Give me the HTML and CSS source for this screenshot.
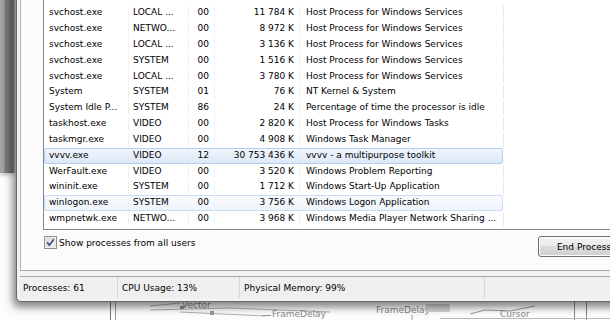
FILE: index.html
```html
<!DOCTYPE html>
<html lang="en">
<head>
    <meta charset="UTF-8">
    <title>Windows Task Manager</title>
    <link rel="stylesheet" href="styles.css">
</head>
<body>
    <div class="desk">
        <!-- janela de fundo (esquerda) -->
        <div class="backwin"></div>

        <!-- patch do vvvv por baixo -->
        <svg class="patch" width="610" height="30" viewBox="0 290 610 30">
            <line x1="110.5" y1="290" x2="110.5" y2="320" stroke="#7a7a7a"/>
            <line x1="115.5" y1="290" x2="115.5" y2="320" stroke="#9a9a9a"/>
            <path d="M150 306 L180 303 M150 310 L230 308 M180 312 L265 316 M230 308 L330 312" stroke="#b0b0b0" fill="none"/>
            <rect x="180" y="306" width="4" height="3" fill="#8a8a8a"/>
            <rect x="210" y="311" width="4" height="4" fill="#9a9a9a"/>
            <text x="182" y="308" class="node">Vector</text>
            <text x="272" y="317" class="node">FrameDelay</text>
            <line x1="262" y1="315.5" x2="271" y2="315.5" stroke="#999"/>
            <text x="376" y="313" class="node">FrameDelay</text>
            <rect x="426" y="304" width="24" height="8" fill="#d4d4d4"/>
            <line x1="412" y1="315" x2="412" y2="320" stroke="#999"/>
            <path d="M470 314 L485 310 L510 311 L535 306" stroke="#9a9a9a" fill="none"/>
            <text x="500" y="317" class="node">Cursor</text>
            <line x1="574.5" y1="300" x2="574.5" y2="320" stroke="#888"/>
            <line x1="586.5" y1="300" x2="586.5" y2="320" stroke="#888"/>
            <line x1="440" y1="318.5" x2="610" y2="318.5" stroke="#b8b8b8"/>
        </svg>

        <!-- Gerenciador de Tarefas -->
        <div class="taskmgr">
            <div class="tabpage">
                <div class="list">
                    <div class="row">
                        <span class="c-name">svchost.exe</span><span class="c-user">LOCAL ...</span><span class="c-cpu">00</span><span class="c-mem">11 784 K</span><span class="c-desc">Host Process for Windows Services</span>
                    </div>
                    <div class="row">
                        <span class="c-name">svchost.exe</span><span class="c-user">NETWO...</span><span class="c-cpu">00</span><span class="c-mem">8 972 K</span><span class="c-desc">Host Process for Windows Services</span>
                    </div>
                    <div class="row">
                        <span class="c-name">svchost.exe</span><span class="c-user">LOCAL ...</span><span class="c-cpu">00</span><span class="c-mem">3 136 K</span><span class="c-desc">Host Process for Windows Services</span>
                    </div>
                    <div class="row">
                        <span class="c-name">svchost.exe</span><span class="c-user">SYSTEM</span><span class="c-cpu">00</span><span class="c-mem">1 516 K</span><span class="c-desc">Host Process for Windows Services</span>
                    </div>
                    <div class="row">
                        <span class="c-name">svchost.exe</span><span class="c-user">LOCAL ...</span><span class="c-cpu">00</span><span class="c-mem">3 780 K</span><span class="c-desc">Host Process for Windows Services</span>
                    </div>
                    <div class="row">
                        <span class="c-name">System</span><span class="c-user">SYSTEM</span><span class="c-cpu">01</span><span class="c-mem">76 K</span><span class="c-desc">NT Kernel &amp; System</span>
                    </div>
                    <div class="row">
                        <span class="c-name">System Idle P...</span><span class="c-user">SYSTEM</span><span class="c-cpu">86</span><span class="c-mem">24 K</span><span class="c-desc">Percentage of time the processor is idle</span>
                    </div>
                    <div class="row">
                        <span class="c-name">taskhost.exe</span><span class="c-user">VIDEO</span><span class="c-cpu">00</span><span class="c-mem">2 820 K</span><span class="c-desc">Host Process for Windows Tasks</span>
                    </div>
                    <div class="row">
                        <span class="c-name">taskmgr.exe</span><span class="c-user">VIDEO</span><span class="c-cpu">00</span><span class="c-mem">4 908 K</span><span class="c-desc">Windows Task Manager</span>
                    </div>
                    <div class="row selected">
                        <span class="c-name">vvvv.exe</span><span class="c-user">VIDEO</span><span class="c-cpu">12</span><span class="c-mem">30 753 436 K</span><span class="c-desc">vvvv - a multipurpose toolkit</span>
                    </div>
                    <div class="row">
                        <span class="c-name">WerFault.exe</span><span class="c-user">VIDEO</span><span class="c-cpu">00</span><span class="c-mem">3 520 K</span><span class="c-desc">Windows Problem Reporting</span>
                    </div>
                    <div class="row">
                        <span class="c-name">wininit.exe</span><span class="c-user">SYSTEM</span><span class="c-cpu">00</span><span class="c-mem">1 712 K</span><span class="c-desc">Windows Start-Up Application</span>
                    </div>
                    <div class="row hot">
                        <span class="c-name">winlogon.exe</span><span class="c-user">SYSTEM</span><span class="c-cpu">00</span><span class="c-mem">3 756 K</span><span class="c-desc">Windows Logon Application</span>
                    </div>
                    <div class="row">
                        <span class="c-name">wmpnetwk.exe</span><span class="c-user">NETWO...</span><span class="c-cpu">00</span><span class="c-mem">3 968 K</span><span class="c-desc">Windows Media Player Network Sharing ...</span>
                    </div>
                </div>

                <div class="options">
                    <label class="check">
                        <svg width="13" height="13" viewBox="0 0 13 13">
                            <defs>
                                <linearGradient id="cb" x1="0" y1="0" x2="1" y2="1">
                                    <stop offset="0" stop-color="#dcdcdc"/>
                                    <stop offset="1" stop-color="#fbfbfb"/>
                                </linearGradient>
                            </defs>
                            <rect x="0.5" y="0.5" width="12" height="12" fill="#fff" stroke="#8e8f8f"/>
                            <rect x="2" y="2" width="9" height="9" fill="url(#cb)" stroke="#c4c4c4" stroke-width="0.6"/>
                            <path d="M3.2 6.4 L5.4 9.2 L9.8 3.2" stroke="#3b4f86" stroke-width="1.7" fill="none"/>
                        </svg>
                        <span>Show processes from all users</span>
                    </label>
                    <button class="btn">End Process</button>
                </div>
            </div>

            <div class="status">
                <div class="cell c1">Processes: 61</div>
                <div class="cell c2">CPU Usage: 13%</div>
                <div class="cell c3">Physical Memory: 99%</div>
                <div class="cell c4"></div>
            </div>
        </div>
    </div>
</body>
</html>
```

FILE: styles.css
```css
/* Estilo Global */
body {
    margin: 0;
    padding: 0;
    background: #fff;
    font-family: 'DejaVu Sans', 'Liberation Sans', sans-serif;
    font-size: 9px;
    color: #000;
}

.desk {
    position: relative;
    width: 610px;
    height: 320px;
    overflow: hidden;
    background: #fdfdfd;
}

.backwin {
    position: absolute;
    left: 0;
    top: 0;
    width: 15px;
    height: 173px;
    background: linear-gradient(to right, #a6a6a6 0, #9c9c9c 4px, #7a7a7a 5px, #6b6b6b 12px, #8c8c8c 14px, #cfcfcf 15px);
    box-shadow: 0 2px 4px rgba(0, 0, 0, 0.25);
}

.patch {
    position: absolute;
    left: 0;
    top: 290px;
}

.patch .node {
    font-family: 'DejaVu Sans', sans-serif;
    font-size: 9px;
    fill: #8a8a8a;
}

/* janela */
.taskmgr {
    position: absolute;
    left: 16px;
    top: -30px;
    width: 640px;
    height: 332px;
    box-sizing: border-box;
    border: 1px solid #6a6a6a;
    border-radius: 0 0 0 5px;
    padding: 0 0 3px 3px;
    background: #f2f2f2;
    box-shadow: -3px 5px 9px rgba(0, 0, 0, 0.5);
    display: flex;
    flex-direction: column;
}

.tabpage {
    height: 300px;
    box-sizing: border-box;
    border-left: 1px solid #b5b5b5;
    border-bottom: 1px solid #a9a9a9;
    background: #fbfbfb;
    padding: 0 25px 13px 22px;
    display: flex;
    flex-direction: column;
}

.list {
    flex: 1;
    min-height: 0;
    overflow: hidden;
    border: 1px solid #828790;
    border-top: none;
    background: #fff;
    display: flex;
    flex-direction: column;
    justify-content: flex-end;
    padding-bottom: 2px;
}

.row {
    flex: none;
    width: 459px;
    height: 15.85px;
    box-sizing: border-box;
    display: grid;
    grid-template-columns: 84px 60px 26px 85px 204px;
    align-items: center;
    border: 1px solid transparent;
    border-radius: 2px;
    white-space: nowrap;
}

.row span {
    display: block;
    height: 100%;
    line-height: 13.85px;
    border-right: 1px solid #f0f1f4;
    overflow: hidden;
}

.row .c-desc {
    border-right-color: #e6e8ec;
}

.c-name { padding-left: 4px; }
.c-user { padding-left: 4px; }
.c-cpu { padding-right: 5px; text-align: right; }
.c-mem { padding-right: 5px; text-align: right; }
.c-desc { padding-left: 6px; }

.row.selected {
    border-color: #b4cfee;
    background: linear-gradient(#f0f5fd, #dce8f8);
}

.row.hot {
    border-color: #cadcf1;
    background: linear-gradient(#f9fbfe, #eef4fc);
}

.row.selected span,
.row.hot span {
    border-right-color: transparent;
}

/* opções abaixo da lista */
.options {
    margin-top: 6px;
    height: 21px;
    display: flex;
    align-items: flex-start;
}

.check {
    display: flex;
    align-items: center;
    gap: 2px;
    margin-left: 1px;
    height: 13px;
    color: #000;
}

.check svg {
    display: block;
}

.btn {
    margin-left: auto;
    width: 92px;
    height: 21px;
    padding: 0;
    font-family: 'DejaVu Sans', 'Liberation Sans', sans-serif;
    font-size: 9px;
    color: #000;
    border: 1px solid #707070;
    border-radius: 3px;
    background: linear-gradient(#f4f4f4 0, #ebebeb 45%, #dddddd 50%, #cfcfcf 100%);
    box-shadow: inset 0 0 0 1px #fcfcfc;
}

/* barra de status */
.status {
    margin-top: 5px;
    height: 22px;
    box-sizing: border-box;
    border-top: 1px solid #a8a8a8;
    background: #efefef;
    display: flex;
    align-items: stretch;
}

.cell {
    display: flex;
    align-items: center;
    border-right: 1px solid #d7d7d7;
    box-sizing: border-box;
}

.c1 { width: 98px; padding-left: 3px; }
.c2 { width: 122px; padding-left: 4px; }
.c3 { width: 245px; padding-left: 4px; }
.c4 { flex: 1; border-right: none; }
```
